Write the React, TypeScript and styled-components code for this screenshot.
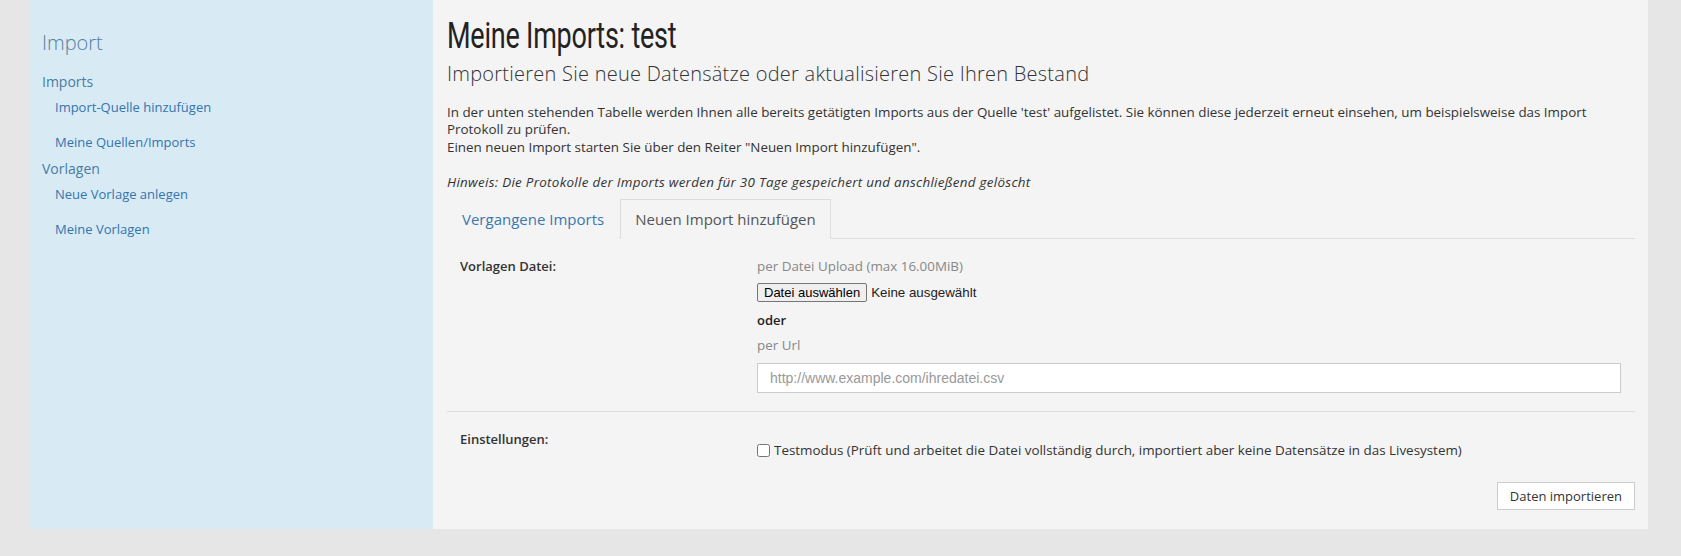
import styled, { createGlobalStyle } from 'styled-components';

const GlobalStyle = createGlobalStyle`
  html, body {
    margin: 0;
    padding: 0;
    background: #e6e6e6;
  }

  body {
    font-family: 'Open Sans', 'Liberation Sans', sans-serif;
    font-size: 13.4px;
    color: #333;
  }

  * {
    box-sizing: border-box;
  }
`;

const subLinks = {
  Imports: ['Import-Quelle hinzufügen', 'Meine Quellen/Imports'],
  Vorlagen: ['Neue Vorlage anlegen', 'Meine Vorlagen'],
};

export default function App() {
  return (
    <>
      <GlobalStyle />
      <Page>
        <Shell>
          <Sidebar>
            <SideTitle>Import</SideTitle>
            {Object.entries(subLinks).map(([group, links]) => (
              <NavGroup key={group}>
                <GroupTitle>{group}</GroupTitle>
                {links.map((link) => (
                  <NavLink key={link} href="#">
                    {link}
                  </NavLink>
                ))}
              </NavGroup>
            ))}
          </Sidebar>

          <Main>
            <Title>Meine Imports: test</Title>
            <Subtitle>Importieren Sie neue Datensätze oder aktualisieren Sie Ihren Bestand</Subtitle>
            <Intro>
              In der unten stehenden Tabelle werden Ihnen alle bereits getätigten Imports aus der Quelle
              'test' aufgelistet. Sie können diese jederzeit erneut einsehen, um beispielsweise das Import
              Protokoll zu prüfen.
              <br />
              Einen neuen Import starten Sie über den Reiter "Neuen Import hinzufügen".
              <br />
              <br />
              <Note>Hinweis: Die Protokolle der Imports werden für 30 Tage gespeichert und anschließend gelöscht</Note>
            </Intro>

            <TabBar>
              <Tab>Vergangene Imports</Tab>
              <Tab $active>Neuen Import hinzufügen</Tab>
            </TabBar>

            <FormBody>
              <FormRow>
                <Label>Vorlagen Datei:</Label>
                <Control>
                  <Hint>per Datei Upload (max 16.00MiB)</Hint>
                  <FilePicker>
                    <FileButton type="button">Datei auswählen</FileButton>
                    <FileName>Keine ausgewählt</FileName>
                  </FilePicker>
                  <Or>oder</Or>
                  <Hint $spaced>per Url</Hint>
                  <UrlInput placeholder="http://www.example.com/ihredatei.csv" />
                </Control>
              </FormRow>

              <Divider />

              <FormRow>
                <Label>Einstellungen:</Label>
                <Control>
                  <CheckLabel>
                    <input type="checkbox" />
                    Testmodus (Prüft und arbeitet die Datei vollständig durch, importiert aber keine
                    Datensätze in das Livesystem)
                  </CheckLabel>
                </Control>
              </FormRow>

              <Actions>
                <SubmitButton type="button">Daten importieren</SubmitButton>
              </Actions>
            </FormBody>
          </Main>
        </Shell>
      </Page>
    </>
  );
}

const Page = styled.div`
  padding: 0 33px 0 29px;
`;

const Shell = styled.div`
  display: flex;
  align-items: stretch;
`;

const Sidebar = styled.aside`
  flex: 0 0 404px;
  padding: 29px 13px 0 13px;

  background-color: #d8ebf5;
`;

const SideTitle = styled.h2`
  margin: 0 0 16px 0;

  font-size: 20px;
  font-weight: 300;
  line-height: 28px;
  color: #55809f;
`;

const NavGroup = styled.div`
  display: flex;
  flex-direction: column;
`;

const GroupTitle = styled.span`
  font-size: 14px;
  line-height: 17px;
  color: #4a7ba2;
`;

const NavLink = styled.a`
  padding-left: 13px;

  font-size: 13px;
  line-height: 35px;
  color: #3474ae;
  text-decoration: none;
`;

const Main = styled.main`
  flex: 1;
  padding: 0 13px 19px 14px;

  background-color: #f4f4f4;
`;

// condensed display face, no Oswald offline: narrow Roboto instead
const Title = styled.h1`
  margin: 16px 0 0 0;

  font-family: Roboto, 'Liberation Sans', sans-serif;
  font-size: 36px;
  font-weight: 400;
  line-height: 40px;
  letter-spacing: -0.3px;
  color: #222;

  transform: scaleX(0.75);
  transform-origin: left center;
`;

const Subtitle = styled.h3`
  margin: 7px 0 0 0;

  font-size: 20px;
  font-weight: 300;
  line-height: 21px;
  letter-spacing: 0.25px;
  color: #333;
`;

const Intro = styled.p`
  margin: 20px 0 8px 0;

  line-height: 17.4px;
`;

const Note = styled.i`
  letter-spacing: 0.3px;
`;

const TabBar = styled.div`
  display: flex;

  border-bottom: 1px solid #ddd;
`;

const Tab = styled.a<{ $active?: boolean }>`
  margin: 0 1px -1px 0;
  padding: 9px 14px;

  border: 1px solid ${({ $active }) => ($active ? '#ddd' : 'transparent')};
  border-bottom-color: ${({ $active }) => ($active ? '#f4f4f4' : 'transparent')};
  background-color: #f4f4f4;

  font-size: 15px;
  line-height: 20px;
  color: ${({ $active }) => ($active ? '#555' : '#3a77b0')};
`;

const FormBody = styled.div`
  padding-top: 19px;
`;

const FormRow = styled.div`
  display: grid;
  grid-template-columns: 310px 1fr;
`;

const Label = styled.label`
  padding-left: 13px;

  font-size: 13px;
  font-weight: 600;
  line-height: 17px;
  color: #333;
`;

const Control = styled.div`
  display: flex;
  flex-direction: column;
  padding-right: 14px;
`;

const Hint = styled.span<{ $spaced?: boolean }>`
  margin-top: ${({ $spaced }) => ($spaced ? '8px' : '0')};

  line-height: 17px;
  color: #888;
`;

const FilePicker = styled.div`
  display: flex;
  align-items: center;
  margin-top: 8px;

  font-family: 'Liberation Sans', Arial, sans-serif;
  font-size: 13.33px;
`;

const FileButton = styled.button`
  height: 19px;
  padding: 0 6px;

  background-color: #efefef;
  border: 1px solid #767676;
  border-radius: 2px;

  font-family: inherit;
  font-size: 13px;
  color: #000;
`;

const FileName = styled.span`
  margin-left: 4px;
  color: #222;
`;

const Or = styled.strong`
  margin-top: 10px;

  font-size: 13px;
  font-weight: 600;
  line-height: 17px;
  color: #222;
`;

const UrlInput = styled.input`
  height: 30px;
  margin-top: 9px;
  padding: 0 12px;

  background-color: #fff;
  border: 1px solid #ccc;

  font-family: 'Liberation Sans', Arial, sans-serif;
  font-size: 14px;

  &::placeholder {
    color: #999;
  }
`;

const Divider = styled.hr`
  margin: 18px 0 19px 0;

  border: none;
  border-top: 1px solid #ddd;
`;

const CheckLabel = styled.label`
  display: flex;
  align-items: center;
  margin-top: 11px;

  line-height: 17px;
  color: #333;

  input {
    width: 13px;
    height: 13px;
    margin: 0 4px 0 0;
  }
`;

const Actions = styled.div`
  display: flex;
  justify-content: flex-end;
  margin-top: 23px;
`;

const SubmitButton = styled.button`
  height: 28px;
  padding: 0 12px;

  background-color: #fff;
  border: 1px solid #ccc;

  font-family: inherit;
  font-size: 13px;
  color: #333;
`;
